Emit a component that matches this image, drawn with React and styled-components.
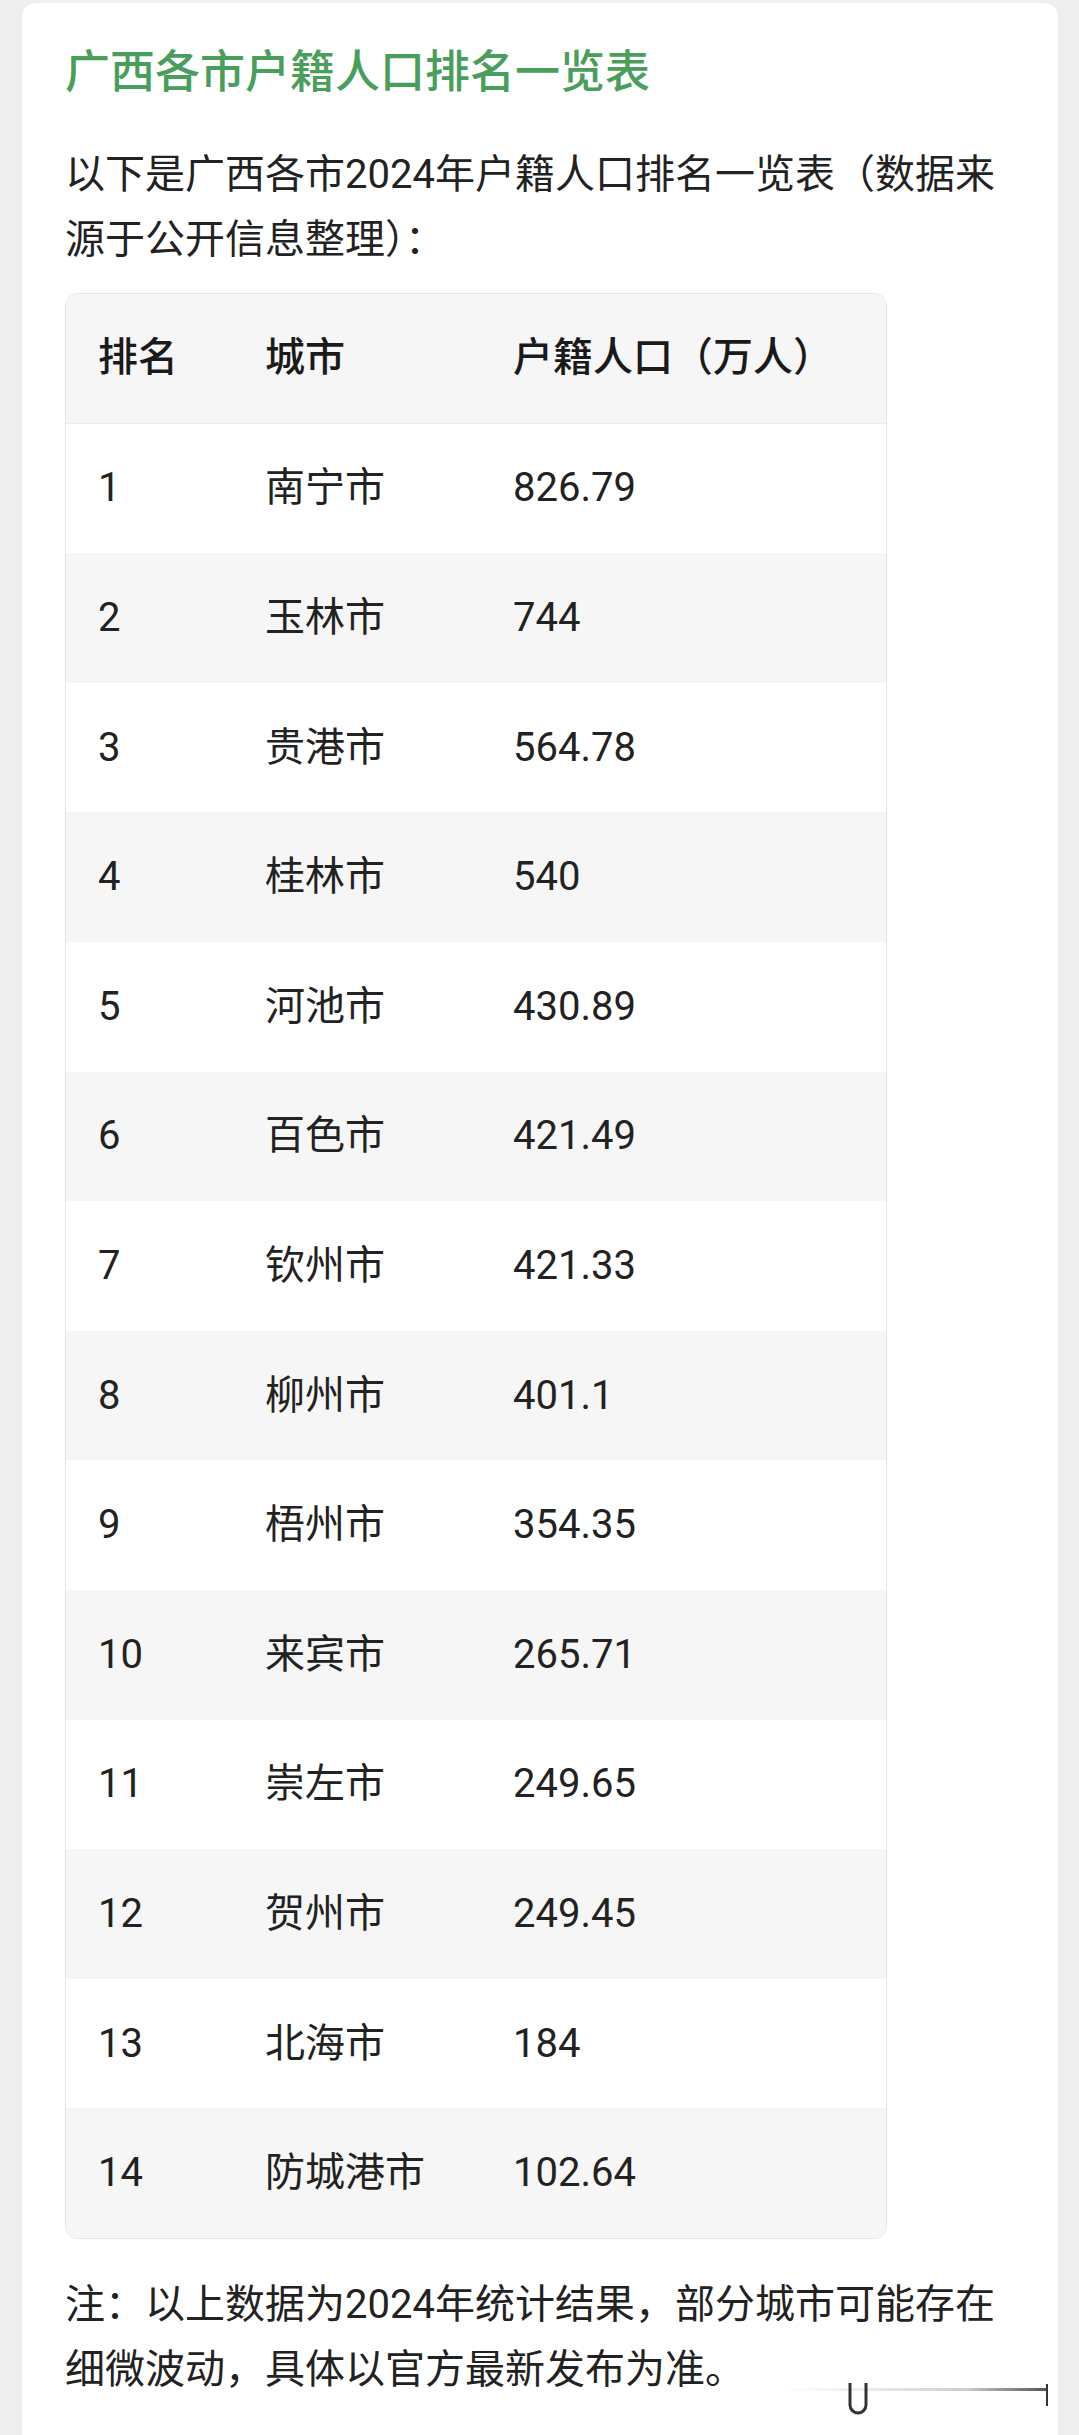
import styled, { createGlobalStyle } from "styled-components";

const GlobalStyle = createGlobalStyle`
  html, body {
    margin: 0;
    padding: 0;
    background: #efefef;
  }
  * {
    box-sizing: border-box;
  }
`;

const Page = styled.div`
  padding: 3px 21px 0 22px;
  font-family: Roboto, "Noto Sans CJK SC", "Noto Sans", sans-serif;
  color: #222;
`;

const Card = styled.div`
  position: relative;
  min-height: calc(100vh - 3px);
  background: #fff;
  border-radius: 14px 14px 0 0;
  padding: 38px 43px 0 43px;
`;

const Title = styled.h1`
  margin: 0;
  font-size: 45px;
  line-height: 63px;
  font-weight: 500;
  color: #4a9e5c;
`;

const Text = styled.p`
  margin: ${({ $top }) => $top || "0"} 0 0;
  font-size: 40px;
  line-height: 65px;
  color: #222;
`;

const Table = styled.div`
  margin-top: 21px;
  width: 822px;
  border: 1px solid #e6e6e6;
  border-radius: 12px;
  overflow: hidden;
`;

const Row = styled.div`
  display: grid;
  grid-template-columns: 167px 248px 1fr;
  align-items: center;
  height: 129.6px;
  background: ${({ $shade }) => ($shade ? "#f6f6f6" : "#fff")};
  border-bottom: ${({ $head }) => ($head ? "1px solid #ebebeb" : "none")};
`;

const Cell = styled.div`
  padding: 0 0 0 32px;
  font-size: 40px;
  line-height: 56px;
  font-weight: ${({ $head }) => ($head ? 500 : 400)};
  color: ${({ $head }) => ($head ? "#1a1a1a" : "#222")};
  white-space: nowrap;
`;

const Mark = styled.svg`
  position: absolute;
  right: 6px;
  bottom: 20px;
  width: 272px;
  height: 34px;
`;

const rows = [
  ["1", "南宁市", "826.79"],
  ["2", "玉林市", "744"],
  ["3", "贵港市", "564.78"],
  ["4", "桂林市", "540"],
  ["5", "河池市", "430.89"],
  ["6", "百色市", "421.49"],
  ["7", "钦州市", "421.33"],
  ["8", "柳州市", "401.1"],
  ["9", "梧州市", "354.35"],
  ["10", "来宾市", "265.71"],
  ["11", "崇左市", "249.65"],
  ["12", "贺州市", "249.45"],
  ["13", "北海市", "184"],
  ["14", "防城港市", "102.64"],
];

export default function App() {
  return (
    <Page>
      <GlobalStyle />
      <Card>
        <Title>广西各市户籍人口排名一览表</Title>
        <Text $top="38px">
          以下是广西各市2024年户籍人口排名一览表（数据来源于公开信息整理）：
        </Text>

        <Table>
          <Row $shade $head>
            <Cell $head>排名</Cell>
            <Cell $head>城市</Cell>
            <Cell $head>户籍人口（万人）</Cell>
          </Row>
          {rows.map(([rank, city, pop], i) => (
            <Row key={rank} $shade={i % 2 === 1}>
              <Cell>{rank}</Cell>
              <Cell>{city}</Cell>
              <Cell>{pop}</Cell>
            </Row>
          ))}
        </Table>

        <Text $top="33px">
          注：以上数据为2024年统计结果，部分城市可能存在细微波动，具体以官方最新发布为准。
        </Text>

        {/* faint watermark strip, bottom right */}
        <Mark viewBox="0 0 272 34">
          <defs>
            <linearGradient id="wm" x1="0" x2="1">
              <stop offset="0" stopColor="#ddd" stopOpacity="0" />
              <stop offset="0.7" stopColor="#ccc" />
              <stop offset="1" stopColor="#555" />
            </linearGradient>
          </defs>
          <rect x="0" y="7" width="266" height="3" fill="url(#wm)" />
          <path
            d="M70 2 V24 a8 8 0 0 0 16 0 V2"
            fill="none"
            stroke="#333"
            strokeWidth="3"
          />
          <rect x="266" y="3" width="2" height="22" fill="#333" />
        </Mark>
      </Card>
    </Page>
  );
}
